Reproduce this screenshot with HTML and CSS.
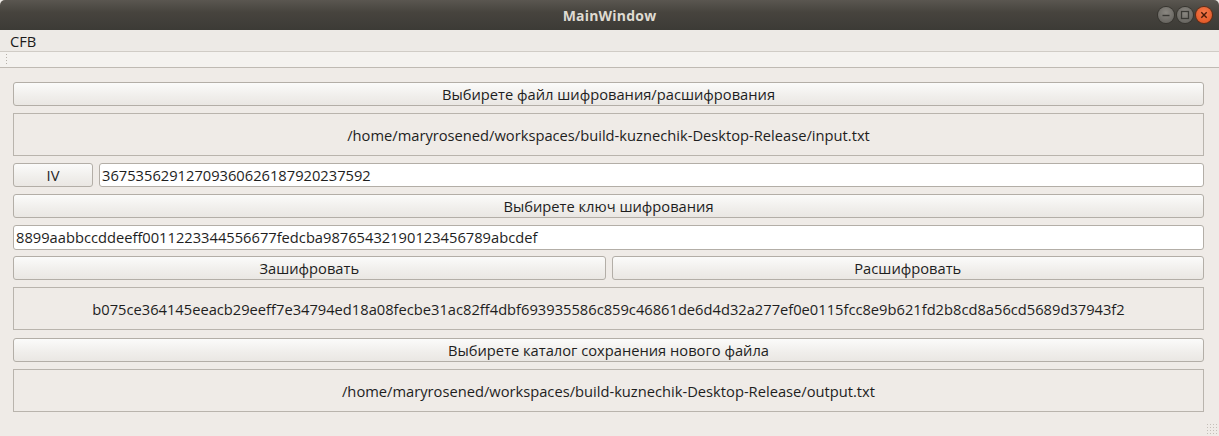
FILE: index.html
```html
<!DOCTYPE html>
<html lang="ru">
<head>
<meta charset="utf-8">
<title>MainWindow</title>
<link rel="stylesheet" href="styles.css">
</head>
<body>
<div class="window">
  <header class="titlebar">
    <span class="title">MainWindow</span>
    <div class="wm-buttons">
      <span class="wm-btn wm-min"><svg width="16" height="16" viewBox="0 0 16 16"><line x1="4.5" y1="8.5" x2="11.5" y2="8.5" stroke="#3a3935" stroke-width="1.4"/></svg></span>
      <span class="wm-btn wm-max"><svg width="16" height="16" viewBox="0 0 16 16"><rect x="4.5" y="4.5" width="7" height="7" fill="none" stroke="#3a3935" stroke-width="1.3"/></svg></span>
      <span class="wm-btn wm-close"><svg width="16" height="16" viewBox="0 0 16 16"><path d="M5.3 5.3 L10.7 10.7 M10.7 5.3 L5.3 10.7" stroke="#4a1a08" stroke-width="1.4"/></svg></span>
    </div>
  </header>
  <nav class="menubar"><span class="menu-item">CFB</span></nav>
  <div class="toolbar"><span class="handle"></span></div>
  <main class="central">
    <button class="btn">Выбирете файл шифрования/расшифрования</button>
    <div class="frame">/home/maryrosened/workspaces/build-kuznechik-Desktop-Release/input.txt</div>
    <div class="row">
      <button class="btn btn-iv">IV</button>
      <div class="input grow">36753562912709360626187920237592</div>
    </div>
    <button class="btn">Выбирете ключ шифрования</button>
    <div class="input key">8899aabbccddeeff0011223344556677fedcba98765432190123456789abcdef</div>
    <div class="row">
      <button class="btn grow">Зашифровать</button>
      <button class="btn grow">Расшифровать</button>
    </div>
    <div class="frame">b075ce364145eeacb29eeff7e34794ed18a08fecbe31ac82ff4dbf693935586c859c46861de6d4d32a277ef0e0115fcc8e9b621fd2b8cd8a56cd5689d37943f2</div>
    <button class="btn save">Выбирете каталог сохранения нового файла</button>
    <div class="frame">/home/maryrosened/workspaces/build-kuznechik-Desktop-Release/output.txt</div>
  </main>
  <span class="grip"></span>
</div>
</body>
</html>
```
FILE: styles.css
```css
html, body {
  margin: 0;
  padding: 0;
  background: #efebe7;
}
.window {
  position: relative;
  width: 1219px;
  height: 436px;
  display: flex;
  flex-direction: column;
  font-family: "Open Sans", "DejaVu Sans", sans-serif;
  font-size: 14.7px;
  color: #1e1e1e;
  overflow: hidden;
}
.titlebar {
  position: relative;
  height: 30px;
  flex: none;
  background: linear-gradient(#5a5650, #47443e 40%, #3c3b36);
  border-radius: 5px 5px 0 0;
  display: flex;
  align-items: center;
  justify-content: center;
}
.title {
  color: #dfdbd2;
  font-weight: bold;
  font-size: 14px;
  letter-spacing: 0.2px;
}
.wm-buttons {
  position: absolute;
  right: 7px;
  top: 7px;
  display: flex;
  gap: 3px;
}
.wm-btn {
  width: 16px;
  height: 16px;
  border-radius: 50%;
  display: flex;
  align-items: center;
  justify-content: center;
  background: radial-gradient(circle at 50% 35%, #8a8781, #5e5c57);
  box-shadow: 0 0 0 1px #36342f;
}
.wm-close {
  background: radial-gradient(circle at 50% 35%, #f47a4c, #e0501c);
  box-shadow: 0 0 0 1px #6a2a10;
}
.menubar {
  height: 21px;
  flex: none;
  background: #edeae6;
  display: flex;
  align-items: center;
}
.menu-item {
  padding-left: 10px;
  font-size: 14.7px;
  color: #1b1b1b;
}
.toolbar {
  height: 15px;
  flex: none;
  background: #f4f2ef;
  border-top: 1px solid #d0ccc6;
  border-bottom: 1px solid #bfbab3;
  display: flex;
  align-items: center;
}
.handle {
  margin-left: 5px;
  width: 4px;
  height: 13px;
  background-image: radial-gradient(circle, #b5b0a9 0.8px, transparent 1px);
  background-size: 3px 3px;
}
.central {
  flex: 1;
  display: flex;
  flex-direction: column;
  gap: 7px;
  padding: 14px 15px 0 13px;
}
.row {
  display: flex;
  gap: 6px;
  flex: none;
}
.btn {
  height: 24px;
  flex: none;
  box-sizing: border-box;
  border: 1px solid #b3aea7;
  border-radius: 3px;
  background: linear-gradient(#fbfbfa, #f0eeeb 60%, #eae7e3);
  font-family: inherit;
  font-size: 14.7px;
  color: #1e1e1e;
  padding: 0;
  margin: 0;
  line-height: 22px;
}
.btn-iv {
  width: 80px;
}
.row .grow {
  flex: 1;
}
.input {
  flex: none;
  height: 25px;
  box-sizing: border-box;
  border: 1px solid #b3aea7;
  border-radius: 3px;
  background: #ffffff;
  padding: 0 2px;
  line-height: 23px;
  white-space: nowrap;
  overflow: hidden;
}
.key {
  margin-bottom: -1px;
}
.save {
  margin-top: 1px;
}
.row .input {
  height: 24px;
  line-height: 22px;
}
.frame {
  flex: none;
  height: 43px;
  box-sizing: border-box;
  border: 1px solid #b9b4ad;
  display: flex;
  align-items: center;
  justify-content: center;
  white-space: nowrap;
}
.grip {
  position: absolute;
  right: 2px;
  bottom: 2px;
  width: 11px;
  height: 11px;
  background-image: radial-gradient(circle, #c4bfb8 0.8px, transparent 1px);
  background-size: 3px 3px;
}
```
